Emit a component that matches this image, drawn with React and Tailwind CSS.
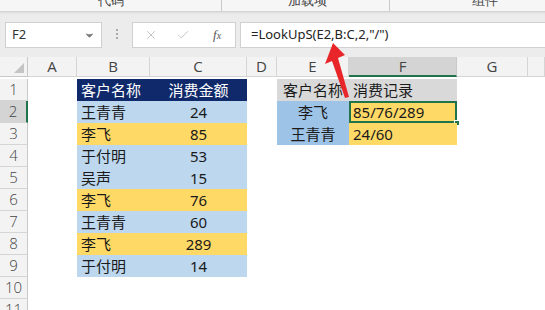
import { ChevronDown, X, Check } from 'lucide-react'

const COLS = ['A', 'B', 'C', 'D', 'E', 'F', 'G', '']

const NAVY = 'bg-[#10296a] text-white'
const BLUE = 'bg-[#bdd7ee]'
const GOLD = 'bg-[#ffd966]'

const ROWS = [
  { b: ['客户名称', NAVY], c: ['消费金额', NAVY], e: ['客户名称', 'bg-[#d9d9d9]'], f: ['消费记录', 'bg-[#d9d9d9]'] },
  { b: ['王青青', BLUE], c: ['24', BLUE], e: ['李飞', 'bg-[#9dc3e6]'], f: ['85/76/289', GOLD], sel: true },
  { b: ['李飞', GOLD], c: ['85', GOLD], e: ['王青青', 'bg-[#9dc3e6]'], f: ['24/60', GOLD] },
  { b: ['于付明', BLUE], c: ['53', BLUE] },
  { b: ['吴声', BLUE], c: ['15', BLUE] },
  { b: ['李飞', GOLD], c: ['76', GOLD] },
  { b: ['王青青', BLUE], c: ['60', BLUE] },
  { b: ['李飞', GOLD], c: ['289', GOLD] },
  { b: ['于付明', BLUE], c: ['14', BLUE] },
  {},
  {},
]

const font = { fontFamily: '"Noto Sans", "Noto Sans CJK SC", sans-serif' }

function Ribbon() {
  return (
    <div className="relative h-[11px] overflow-hidden bg-[#f6f6f6] text-[13px] text-[#444]">
      <span className="absolute left-[98px] top-[-9px]">代码</span>
      <span className="absolute left-[288px] top-[-9px]">加载项</span>
      <span className="absolute left-[472px] top-[-9px]">组件</span>
      <div className="absolute left-[221px] top-0 h-full w-px bg-[#c8c8c8]" />
      <div className="absolute left-[389px] top-0 h-full w-px bg-[#c8c8c8]" />
    </div>
  )
}

function FormulaBar() {
  return (
    <div className="flex h-[46px] items-start bg-[#ececec] pt-[11px] shadow-[inset_0_3px_3px_-2px_rgba(0,0,0,0.15)]">
      <div className="ml-[5px] flex h-[26px] w-[97px] items-center justify-between border border-[#d0d0d0] bg-white pl-[6px] pr-[6px] text-[13px] text-[#333]">
        F2
        <ChevronDown size={11} strokeWidth={3} className="text-[#777]" fill="#777" />
      </div>
      <div className="flex w-[30px] flex-col items-center justify-center gap-[2px] self-stretch pb-[11px]">
        <span className="h-[2px] w-[2px] bg-[#aaa]" />
        <span className="h-[2px] w-[2px] bg-[#aaa]" />
        <span className="h-[2px] w-[2px] bg-[#aaa]" />
      </div>
      <div className="flex h-[26px] w-[104px] items-center border border-[#d0d0d0] bg-white text-[#bbb]">
        <X size={14} strokeWidth={1.5} className="ml-[11px]" />
        <Check size={14} strokeWidth={1.5} className="ml-[18px]" />
        <span className="ml-[23px] text-[13px] italic text-[#555]" style={{ fontFamily: '"Liberation Serif", serif' }}>
          f<span className="text-[10px]">x</span>
        </span>
      </div>
      <div className="ml-[4px] flex h-[26px] flex-1 items-center border border-r-0 border-[#d0d0d0] bg-white pl-[10px] text-[13px] text-[#222]" style={font}>
        =LookUpS(E2,B:C,2,"/")
      </div>
    </div>
  )
}

function Cell({ v, cls = '', align = 'left', sel }) {
  const a = align === 'center' ? 'justify-center' : 'justify-start pl-[4px]'
  return (
    <div className={`relative flex items-center ${a} ${cls} text-[15px] text-[#1a1a1a]`} style={font}>
      <span className={cls.includes('text-white') ? 'text-white' : ''}>{v}</span>
      {sel && (
        <>
          <div className="absolute inset-0 border-2 border-[#21734b]" />
          <div className="absolute bottom-[-3px] right-[-3px] h-[6px] w-[6px] border border-white bg-[#21734b]" />
        </>
      )}
    </div>
  )
}

function Sheet() {
  return (
    <div
      className="grid bg-white"
      style={{ gridTemplateColumns: '28px 49px 73px 97px 30px 72px 108px 71px 1fr', gridAutoRows: '22px' }}
    >
      <div className="relative h-[20px] border-b border-r border-[#c9c9c9] bg-[#f3f3f3]">
        <div className="absolute bottom-[3px] right-[3px] h-0 w-0 border-b-[10px] border-l-[10px] border-b-[#c4c4c4] border-l-transparent" />
      </div>
      {COLS.map((c) => (
        <div
          key={c || 'h'}
          className={`flex h-[20px] items-center justify-center border-r text-[15px] text-[#444] ${
            c === 'F' ? 'border-b-2 border-b-[#21734b] border-r-[#c9c9c9] bg-[#d4d4d4]' : 'border-b border-[#d5d5d5] bg-[#f3f3f3]'
          }`}
          style={{ fontFamily: '"Open Sans", sans-serif' }}
        >
          {c}
        </div>
      ))}
      {ROWS.map((r, i) => (
        <Row key={i} n={i + 1} r={r} />
      ))}
    </div>
  )
}

function Row({ n, r }) {
  return (
    <>
      <div
        className={`flex items-center justify-center border-b border-[#d5d5d5] text-[15px] font-light text-[#444] ${
          n === 2 ? 'border-r-2 border-r-[#21734b] bg-[#d4d4d4]' : 'border-r border-r-[#c9c9c9] bg-[#f3f3f3]'
        }`}
        style={{ fontFamily: '"Open Sans", sans-serif' }}
      >
        {n}
      </div>
      <div />
      {r.b ? <Cell v={r.b[0]} cls={r.b[1]} /> : <div />}
      {r.c ? <Cell v={r.c[0]} cls={r.c[1]} align="center" /> : <div />}
      <div />
      {r.e ? <Cell v={r.e[0]} cls={r.e[1]} align="center" /> : <div />}
      {r.f ? <Cell v={r.f[0]} cls={r.f[1]} sel={r.sel} /> : <div />}
      <div />
      <div />
    </>
  )
}

export default function App() {
  return (
    <div className="relative h-[310px] w-[545px] overflow-hidden bg-white">
      <Ribbon />
      <FormulaBar />
      <Sheet />
      <svg className="pointer-events-none absolute left-0 top-0" width="545" height="310">
        <polygon points="333,43 325,64 332,61 345,98 349,97 338,58 345,55" fill="#e8262a" />
      </svg>
    </div>
  )
}
